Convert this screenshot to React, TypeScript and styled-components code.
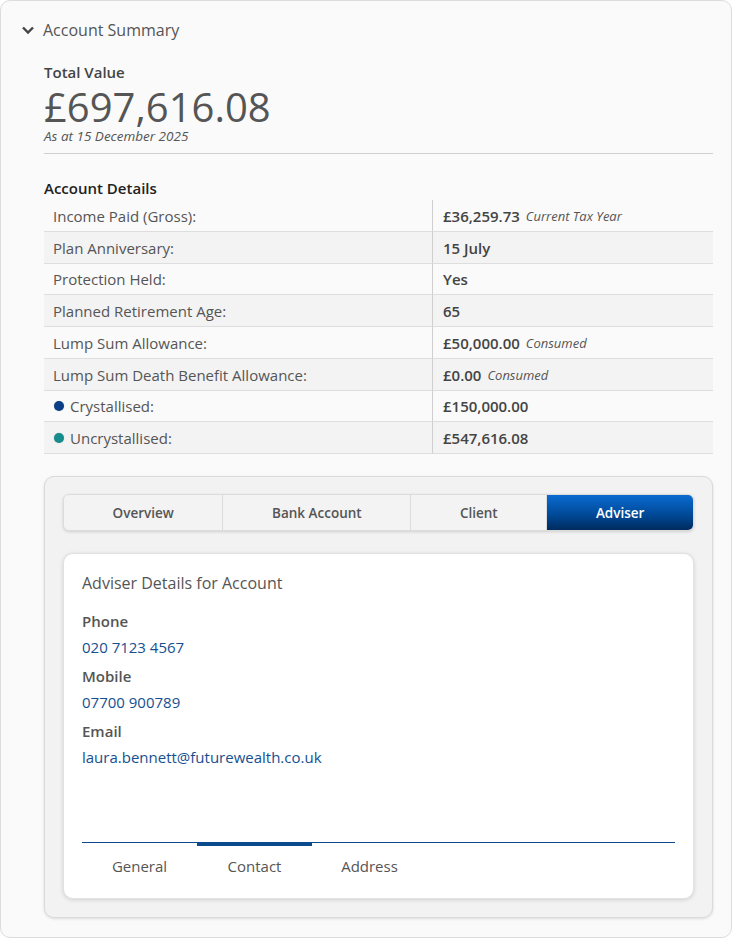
import React from "react";
import styled, { createGlobalStyle } from "styled-components";

const Global = createGlobalStyle`
  html, body { margin: 0; padding: 0; background: #ffffff; }
  body { font-family: "Open Sans", "Noto Sans", Arial, sans-serif; color: #555; }
  * { box-sizing: border-box; }
`;

const Page = styled.div`
  width: 732px;
  height: 938px;
  background: #fafafa;
  border: 1px solid #dcdcdc;
  border-radius: 10px;
  padding: 17px 18px 0 0;
`;

const Header = styled.div`
  display: flex;
  align-items: center;
  gap: 8px;
  padding-left: 20px;
  height: 24px;
  font-size: 16px;
  color: #555;
`;

const Content = styled.div`
  padding-left: 43px;
`;

const TotalLabel = styled.div`
  margin-top: 20px;
  font-size: 15px;
  font-weight: 600;
  color: #444;
  line-height: 20px;
`;

const TotalValue = styled.div`
  font-size: 40px;
  line-height: 40px;
  color: #555;
  margin-top: 5px;
`;

const AsAt = styled.div`
  font-size: 13.5px;
  font-style: italic;
  color: #555;
  line-height: 18px;
  margin-top: 0;
`;

const Divider = styled.hr`
  border: 0;
  border-top: 1px solid #cfcfcf;
  margin: 8px 0 0 0;
`;

const SectionTitle = styled.div`
  margin-top: 24px;
  font-size: 15px;
  font-weight: 600;
  color: #222;
  line-height: 20px;
`;

const Table = styled.div`
  margin-top: 2px;
  display: grid;
  grid-template-columns: 388px 1fr;
`;

const Cell = styled.div<{ $shade: boolean; $value?: boolean }>`
  height: 31.75px;
  display: flex;
  align-items: center;
  gap: 6px;
  font-size: 15px;
  background: ${(p) => (p.$shade ? "#f3f3f3" : "transparent")};
  border-bottom: 1px solid #dedede;
  padding-left: ${(p) => (p.$value ? "10px" : "9px")};
  color: ${(p) => (p.$value ? "#444" : "#555")};
  font-weight: ${(p) => (p.$value ? 600 : 400)};
  border-left: ${(p) => (p.$value ? "1px solid #cfcfcf" : "none")};
  padding-top: 1px;
`;

const Note = styled.span`
  font-size: 13px;
  font-style: italic;
  font-weight: 400;
  color: #555;
`;

const Dot = styled.span<{ $color: string }>`
  width: 10px;
  height: 10px;
  border-radius: 50%;
  background: ${(p) => p.$color};
  box-shadow: 0 0 1px rgba(0, 0, 0, 0.3);
  margin-left: 1px;
`;

const TabPanel = styled.div`
  margin-top: 22px;
  background: #f2f2f2;
  border: 1px solid #dadada;
  border-radius: 10px;
  box-shadow: 0 1px 3px rgba(0, 0, 0, 0.12);
  padding: 17px 18px 18px 18px;
`;

const TabBar = styled.div`
  display: flex;
  height: 37px;
  border-radius: 6px;
  border: 1px solid #dcdcdc;
  background: #f3f3f3;
  box-shadow: 0 1px 3px rgba(0, 0, 0, 0.15);
  overflow: hidden;
`;

const Tab = styled.div<{ $active: boolean }>`
  flex: 1 1 auto;
  display: flex;
  align-items: center;
  justify-content: center;
  font-size: 13.5px;
  font-weight: 600;
  color: ${(p) => (p.$active ? "#ffffff" : "#555")};
  background: ${(p) =>
    p.$active ? "linear-gradient(180deg, #0a6bd1 0%, #004a99 55%, #002b5e 100%)" : "#f3f3f3"};
  border-left: 1px solid #dcdcdc;
  &:first-child { border-left: none; }
`;

const Card = styled.div`
  margin-top: 22px;
  background: #ffffff;
  border-radius: 10px;
  border: 1px solid #e2e2e2;
  box-shadow: 0 1px 4px rgba(0, 0, 0, 0.14);
  padding: 17px 18px 0 18px;
  height: 346px;
`;

const CardTitle = styled.div`
  font-size: 16px;
  color: #555;
  line-height: 24px;
`;

const FieldLabel = styled.div<{ $first?: boolean }>`
  font-size: 15px;
  font-weight: 600;
  color: #555;
  line-height: 20px;
  margin-top: ${(p) => (p.$first ? "16px" : "9px")};
`;

const FieldValue = styled.div`
  font-size: 15px;
  color: #164f90;
  line-height: 20px;
  margin-top: 6px;
`;

const SubTabs = styled.div`
  margin-top: 75px;
  border-top: 1px solid #0b4a8c;
  display: flex;
`;

const SubTab = styled.div<{ $active: boolean }>`
  width: 115px;
  text-align: center;
  font-size: 15px;
  color: #555;
  line-height: 20px;
  padding-top: 13px;
  position: relative;
  &::before {
    content: "";
    position: absolute;
    left: 0;
    right: 0;
    top: -1px;
    height: 4px;
    background: ${(p) => (p.$active ? "#0b4a8c" : "transparent")};
  }
`;

const rows: { label: string; value: string; note?: string; dot?: string }[] = [
  { label: "Income Paid (Gross):", value: "£36,259.73", note: "Current Tax Year" },
  { label: "Plan Anniversary:", value: "15 July" },
  { label: "Protection Held:", value: "Yes" },
  { label: "Planned Retirement Age:", value: "65" },
  { label: "Lump Sum Allowance:", value: "£50,000.00", note: "Consumed" },
  { label: "Lump Sum Death Benefit Allowance:", value: "£0.00", note: "Consumed" },
  { label: "Crystallised:", value: "£150,000.00", dot: "#0a3f87" },
  { label: "Uncrystallised:", value: "£547,616.08", dot: "#168c8c" },
];

const tabs = ["Overview", "Bank Account", "Client", "Adviser"];

export default function App() {
  return (
    <>
      <Global />
      <Page>
        <Header>
          <svg width="14" height="14" viewBox="0 0 14 14">
            <path d="M2 4.5 L7 9.5 L12 4.5" fill="none" stroke="#444" strokeWidth="2.4" />
          </svg>
          Account Summary
        </Header>
        <Content>
          <TotalLabel>Total Value</TotalLabel>
          <TotalValue>£697,616.08</TotalValue>
          <AsAt>As at 15 December 2025</AsAt>
          <Divider />
          <SectionTitle>Account Details</SectionTitle>
          <Table>
            {rows.map((r, i) => (
              <React.Fragment key={r.label}>
                <Cell $shade={i % 2 === 1}>
                  {r.dot && <Dot $color={r.dot} />}
                  {r.label}
                </Cell>
                <Cell $shade={i % 2 === 1} $value>
                  {r.value}
                  {r.note && <Note>{r.note}</Note>}
                </Cell>
              </React.Fragment>
            ))}
          </Table>
          <TabPanel>
            <TabBar>
              {tabs.map((t) => (
                <Tab key={t} $active={t === "Adviser"}>
                  {t}
                </Tab>
              ))}
            </TabBar>
            <Card>
              <CardTitle>Adviser Details for Account</CardTitle>
              <FieldLabel $first>Phone</FieldLabel>
              <FieldValue>020 7123 4567</FieldValue>
              <FieldLabel>Mobile</FieldLabel>
              <FieldValue>07700 900789</FieldValue>
              <FieldLabel>Email</FieldLabel>
              <FieldValue>laura.bennett@futurewealth.co.uk</FieldValue>
              <SubTabs>
                {["General", "Contact", "Address"].map((t) => (
                  <SubTab key={t} $active={t === "Contact"}>
                    {t}
                  </SubTab>
                ))}
              </SubTabs>
            </Card>
          </TabPanel>
        </Content>
      </Page>
    </>
  );
}
